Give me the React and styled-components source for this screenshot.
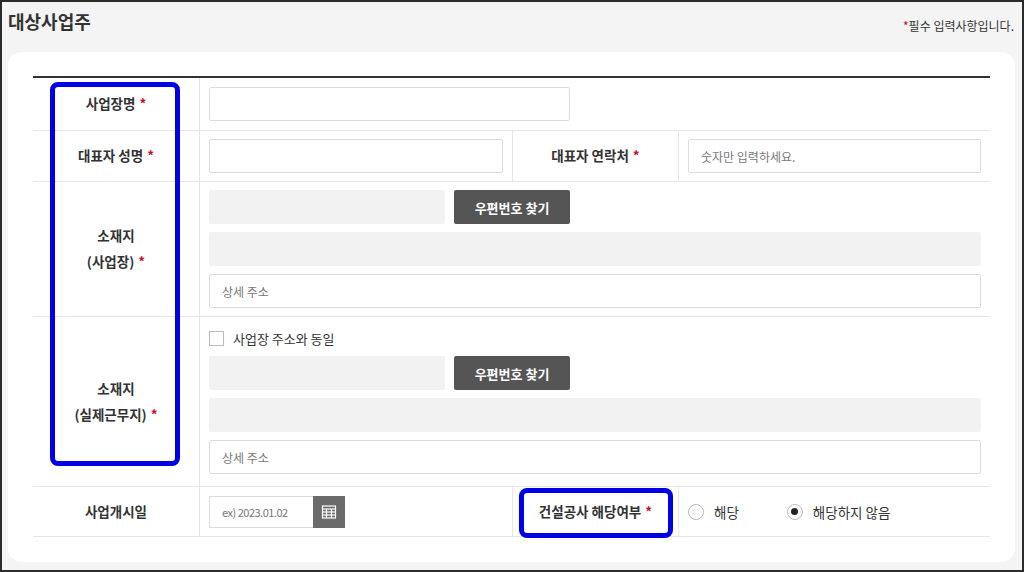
import styled, { createGlobalStyle } from 'styled-components';

const Global = createGlobalStyle`
  html, body { margin: 0; padding: 0; }
  body {
    background: #f4f4f4;
    font-family: "Noto Sans CJK KR", "Noto Sans", sans-serif;
    color: #333;
  }
`;

const Page = styled.div`
  width: 1024px;
  height: 572px;
  box-sizing: border-box;
  border: 2px solid #2b2b2b;
  background: #f4f4f4;
  position: relative;
  overflow: hidden;
`;

const Header = styled.div`
  display: flex;
  justify-content: space-between;
  align-items: flex-start;
  padding: 6px 8px 0 6px;
  height: 46px;
  box-sizing: border-box;
`;

const Title = styled.h2`
  margin: 0;
  font-size: 18px;
  font-weight: 700;
  color: #333;
`;

const Note = styled.span`
  font-size: 12px;
  color: #333;
  margin-top: 9px;
  span { color: #d0021b; }
`;

const Card = styled.div`
  margin: 4px 7px 0 6px;
  background: #fff;
  border-radius: 14px;
  height: 510px;
  padding: 24px 25px 0 25px;
  box-sizing: border-box;
`;

const Table = styled.div`
  display: grid;
  grid-template-columns: 167px 312px 167px 1fr;
  border-top: 2px solid #333;
  width: 957px;
`;

const Label = styled.div`
  display: flex;
  align-items: center;
  justify-content: center;
  text-align: center;
  font-size: 13.5px;
  font-weight: 700;
  color: #333;
  line-height: 1.9;
  height: ${({ h }) => h}px;
  border-bottom: 1px solid #e6e6e6;
  border-right: 1px solid #e6e6e6;
  border-left: ${({ mid }) => (mid ? '1px solid #e6e6e6' : 'none')};
  box-sizing: border-box;
`;

const Star = styled.span`
  color: #c8102e;
  margin-left: 4px;
`;

const Cell = styled.div`
  grid-column: ${({ span }) => (span ? '2 / 5' : 'auto')};
  display: flex;
  flex-direction: column;
  justify-content: center;
  gap: 8px;
  padding: 0 9px;
  height: ${({ h }) => h}px;
  border-bottom: 1px solid #e6e6e6;
  box-sizing: border-box;
`;

const Line = styled.div`
  display: flex;
  align-items: center;
  gap: 9px;
`;

const Input = styled.div`
  width: ${({ w }) => (w ? `${w}px` : '100%')};
  height: 34px;
  box-sizing: border-box;
  border: 1px solid ${({ gray }) => (gray ? '#f2f2f2' : '#dcdcdc')};
  background: ${({ gray }) => (gray ? '#f2f2f2' : '#fff')};
  border-radius: 2px;
  display: flex;
  align-items: center;
  padding-left: 12px;
  font-size: 12px;
  color: #777;
`;

const Button = styled.div`
  height: 34px;
  width: 116px;
  justify-content: center;
  background: #555;
  color: #fff;
  font-size: 13px;
  font-weight: 700;
  display: flex;
  align-items: center;
  border-radius: 2px;
`;

const Check = styled.span`
  width: 15px;
  height: 15px;
  border: 1px solid #bbb;
  box-sizing: border-box;
  background: #fff;
`;

const CheckText = styled.span`
  font-size: 13px;
  color: #333;
`;

const DateBox = styled.div`
  display: flex;
  width: 136px;
  height: 32px;
`;

const DateInput = styled.div`
  flex: 1;
  border: 1px solid #dcdcdc;
  border-right: none;
  display: flex;
  align-items: center;
  padding-left: 12px;
  font-size: 11px;
  color: #777;
  letter-spacing: -0.5px;
`;

const CalBtn = styled.div`
  width: 32px;
  background: #6b6b6b;
  display: flex;
  align-items: center;
  justify-content: center;
`;

const Radios = styled.div`
  display: flex;
  align-items: center;
  gap: 48px;
  padding: 0 9px;
  height: 50px;
  border-bottom: 1px solid #e6e6e6;
  box-sizing: border-box;
`;

const Radio = styled.label`
  display: flex;
  align-items: center;
  gap: 10px;
  font-size: 13.5px;
  color: #333;
`;

const Dot = styled.span`
  width: 16px;
  height: 16px;
  border-radius: 50%;
  border: 1px solid #bbb;
  box-sizing: border-box;
  display: flex;
  align-items: center;
  justify-content: center;
  &::after {
    content: '';
    width: 7px;
    height: 7px;
    border-radius: 50%;
    background: ${({ on }) => (on ? '#222' : 'transparent')};
  }
`;

const Highlight = styled.div`
  position: absolute;
  left: ${({ x }) => x}px;
  top: ${({ y }) => y}px;
  width: ${({ w }) => w}px;
  height: ${({ h }) => h}px;
  border: 5px solid #0000e6;
  border-radius: 8px;
  box-sizing: border-box;
  pointer-events: none;
`;

const Calendar = () => (
  <svg width="16" height="16" viewBox="0 0 16 16" fill="none" stroke="#fff" strokeWidth="1.2">
    <rect x="1.5" y="2" width="13" height="12" />
    <line x1="1.5" y1="5" x2="14.5" y2="5" />
    <line x1="5.5" y1="5" x2="5.5" y2="14" />
    <line x1="10.5" y1="5" x2="10.5" y2="14" />
    <line x1="1.5" y1="8" x2="14.5" y2="8" />
    <line x1="1.5" y1="11" x2="14.5" y2="11" />
  </svg>
);

export default function App() {
  return (
    <Page>
      <Global />
      <Header>
        <Title>대상사업주</Title>
        <Note><span>*</span>필수 입력사항입니다.</Note>
      </Header>
      <Card>
        <Table>
          <Label h={53}><span>사업장명<Star>*</Star></span></Label>
          <Cell span h={53}>
            <Input w={361} />
          </Cell>

          <Label h={51}><span>대표자 성명<Star>*</Star></span></Label>
          <Cell h={51}>
            <Input />
          </Cell>
          <Label h={51} mid><span>대표자 연락처<Star>*</Star></span></Label>
          <Cell h={51}>
            <Input>숫자만 입력하세요.</Input>
          </Cell>

          <Label h={135}><span>소재지<br />(사업장)<Star>*</Star></span></Label>
          <Cell span h={135}>
            <Line>
              <Input w={236} gray />
              <Button>우편번호 찾기</Button>
            </Line>
            <Input gray />
            <Input>상세 주소</Input>
          </Cell>

          <Label h={170}><span>소재지<br />(실제근무지)<Star>*</Star></span></Label>
          <Cell span h={170}>
            <Line>
              <Check />
              <CheckText>사업장 주소와 동일</CheckText>
            </Line>
            <Line>
              <Input w={236} gray />
              <Button>우편번호 찾기</Button>
            </Line>
            <Input gray />
            <Input>상세 주소</Input>
          </Cell>

          <Label h={50}>사업개시일</Label>
          <Cell h={50}>
            <DateBox>
              <DateInput>ex) 2023.01.02</DateInput>
              <CalBtn><Calendar /></CalBtn>
            </DateBox>
          </Cell>
          <Label h={50} mid><span>건설공사 해당여부<Star>*</Star></span></Label>
          <Radios>
            <Radio><Dot />해당</Radio>
            <Radio><Dot on />해당하지 않음</Radio>
          </Radios>
        </Table>
      </Card>
      <Highlight x={48} y={80} w={130} h={384} />
      <Highlight x={517} y={486} w={154} h={50} />
    </Page>
  );
}
